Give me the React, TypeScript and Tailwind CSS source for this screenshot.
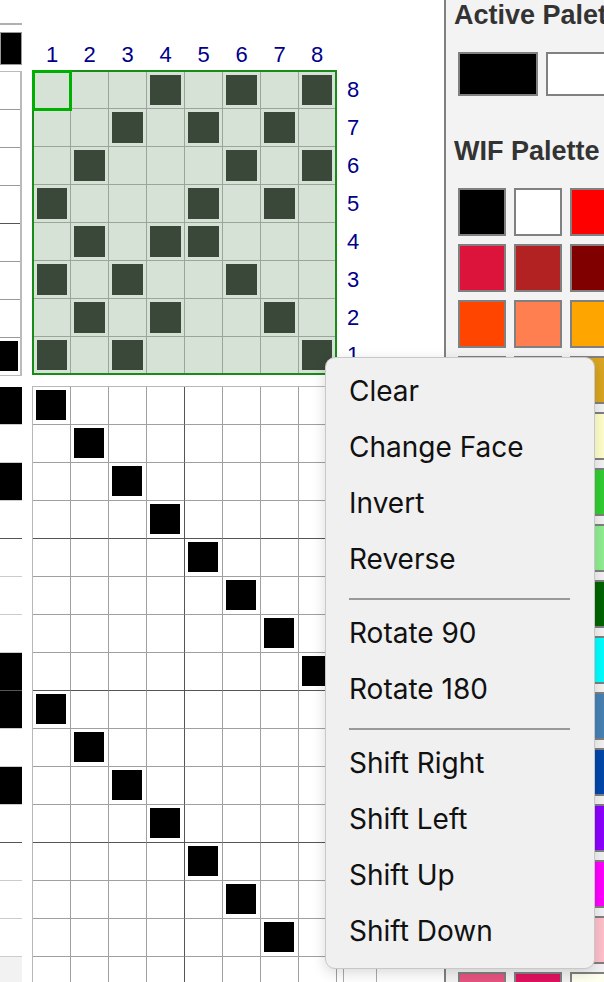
import React from "react";

const tieup: number[][] = [
  [4, 6, 8],
  [3, 5, 7],
  [2, 6, 8],
  [1, 5, 7],
  [2, 4, 5],
  [1, 3, 6],
  [2, 4, 7],
  [1, 3, 8],
];

const weftBlack = [0, 2, 7, 8, 10];

const palette: string[][] = [
  ["#000000", "#ffffff", "#ff0000"],
  ["#dc143c", "#b22222", "#800000"],
  ["#ff4500", "#ff7f50", "#ffa500"],
  ["#ffd700", "#ffff00", "#daa520"],
  ["#f0e68c", "#eee8aa", "#ffffcc"],
  ["#7fff00", "#00ff00", "#32cd32"],
  ["#98fb98", "#00fa9a", "#90ee90"],
  ["#228b22", "#008000", "#006400"],
  ["#40e0d0", "#00ced1", "#00ffff"],
  ["#5f9ea0", "#4169e1", "#4682b4"],
  ["#0000ff", "#0000cd", "#0047ab"],
  ["#9400d3", "#8a2be2", "#8b00ff"],
  ["#da70d6", "#ee82ee", "#ff00ff"],
  ["#ff69b4", "#ffb6c1", "#ffc0cb"],
  ["#e75480", "#e0115f", "#fffff0"],
];

const menu: (string | null)[] = [
  "Clear",
  "Change Face",
  "Invert",
  "Reverse",
  null,
  "Rotate 90",
  "Rotate 180",
  null,
  "Shift Right",
  "Shift Left",
  "Shift Up",
  "Shift Down",
];

function TieUp() {
  return (
    <div className="relative grid grid-cols-[36px_repeat(6,37px)_36px] grid-rows-[36px_repeat(6,37px)_36px] gap-px border-2 border-[#178c17] bg-[#9ba59b]">
      {tieup.map((row, r) =>
        [1, 2, 3, 4, 5, 6, 7, 8].map((c) => (
          <div key={`${r}-${c}`} className="bg-[#d5e2d5] p-[3px]">
            {row.includes(c) && <div className="h-full w-full bg-[#3a483a]" />}
          </div>
        ))
      )}
      <div className="absolute -left-[2px] -top-[2px] h-[41px] w-[40px] border-[3px] border-[#00b000]" />
    </div>
  );
}

function Treadling() {
  const rows = Array.from({ length: 16 }, (_, i) => i);
  return (
    <div className="grid grid-cols-[repeat(8,38px)] border-l border-t border-[#b8b8b8]">
      {rows.map((r) =>
        [0, 1, 2, 3, 4, 5, 6, 7].map((c) => (
          <div
            key={`${r}-${c}`}
            className={`h-[38px] border-b border-r ${c === 3 ? "border-r-[#555]" : "border-r-[#a0a0a0]"} ${
              r % 4 === 3 ? "border-b-[#555]" : "border-b-[#a0a0a0]"
            } pl-[3px] pt-[3px]`}
          >
            {r < 15 && r % 8 === c && <div className="h-[30px] w-[30px] bg-black" />}
          </div>
        ))
      )}
    </div>
  );
}

export default function App() {
  return (
    <div className="relative flex h-[982px] w-[604px] overflow-hidden bg-white font-['Liberation_Sans',Arial,sans-serif]">
      <div className="flex w-[444px] shrink-0 flex-col">
        <div className="flex">
          <div className="w-[22px] shrink-0">
            <div className="h-[23px]" />
            <div className="h-[2px] bg-[#b0b0b0]" />
            <div className="mt-[7px] h-[33px] border border-[#999] bg-black" />
            <div className="mt-[6px] border-r-2 border-t border-[#bbb]">
              {[0, 1, 2, 3, 4, 5, 6, 7].map((r) => (
                <div
                  key={r}
                  className={`h-[38px] border-b ${r === 3 ? "border-[#555]" : r === 7 ? "border-[#bbb]" : "border-[#999]"} pt-[3px]`}
                >
                  {r === 7 && <div className="h-[30px] w-[18px] bg-black" />}
                </div>
              ))}
            </div>
          </div>

          <div className="ml-[10px] shrink-0">
            <div className="grid h-[70px] grid-cols-[36px_repeat(6,37px)_36px] gap-x-px px-[2px] pt-[42px] text-[22px] leading-[26px] text-[#00008b]">
              {[1, 2, 3, 4, 5, 6, 7, 8].map((n) => (
                <div key={n} className="text-center">
                  {n}
                </div>
              ))}
            </div>
            <TieUp />
          </div>

          <div className="mt-[70px] grid grid-rows-[36px_repeat(6,37px)_36px] gap-y-px pl-[10px] pt-[2px] text-[22px] leading-[26px] text-[#00008b]">
            {[8, 7, 6, 5, 4, 3, 2, 1].map((n) => (
              <div key={n} className="flex items-center">
                {n}
              </div>
            ))}
          </div>
        </div>

        <div className="mt-[10px] flex flex-1">
          <div className="flex w-[22px] shrink-0 flex-col pt-px">
            {Array.from({ length: 15 }, (_, r) => (
              <div
                key={r}
                className={`h-[38px] shrink-0 border-b ${r % 4 === 3 ? "border-[#555]" : "border-[#ccc]"}`}
              >
                {weftBlack.includes(r) && <div className="h-full w-full bg-black" />}
              </div>
            ))}
            <div className="flex-1 bg-[#f2f2f2]" />
          </div>
          <div className="ml-[10px] shrink-0">
            <Treadling />
          </div>
          <div className="ml-[6px] w-[34px] shrink-0 border-x border-[#aaa]" />
        </div>
      </div>

      <div className="min-w-0 flex-1 overflow-hidden border-l-2 border-[#808080] bg-[#f3f3f3] pl-[8px]">
        <h2 className="whitespace-nowrap text-[27px] font-bold leading-[30px] text-[#333]">Active Palette</h2>
        <div className="ml-[4px] mt-[22px] flex gap-[8px]">
          <div className="h-[44px] w-[80px] shrink-0 border-2 border-[#808080] bg-black" />
          <div className="h-[44px] w-[80px] shrink-0 border-2 border-[#808080] bg-white" />
        </div>
        <h2 className="mt-[40px] whitespace-nowrap text-[27px] font-bold leading-[30px] text-[#333]">WIF Palette</h2>
        <div className="ml-[4px] mt-[22px] grid grid-cols-[repeat(3,48px)] gap-[8px]">
          {palette.flat().map((color, i) => (
            <div key={i} className="h-[48px] w-[48px] border-2 border-[#808080]" style={{ backgroundColor: color }} />
          ))}
        </div>
      </div>

      <div className="absolute left-[325px] top-[357px] w-[270px] rounded-[10px] border border-[#c8c8c8] bg-[#f0f0f0] pb-[9px] pt-[5px] font-['Inter',sans-serif] shadow-[0_4px_14px_rgba(0,0,0,0.15)]">
        {menu.map((item, i) =>
          item ? (
            <div key={i} className="h-[56px] pl-[23px] text-[28px] leading-[56px] text-[#111]">
              {item}
            </div>
          ) : (
            <div key={i} className="mb-[5px] ml-[23px] mr-[24px] mt-[11px] h-[2px] bg-[#999]" />
          )
        )}
      </div>
    </div>
  );
}
